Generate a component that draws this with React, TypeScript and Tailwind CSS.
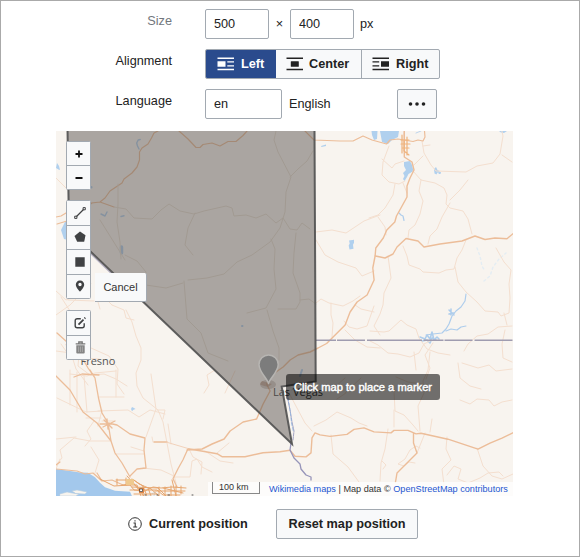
import React from "react";

const water = "#b0d0ee";

function AlignIcon({ kind }: { kind: "left" | "center" | "right" }) {
  return (
    <svg width="18" height="14" viewBox="0 0 18 14" fill="currentColor" className="shrink-0">
      {kind === "left" && (
        <>
          <path d="M.5.5h16.500v1.500H.5zM.5 11.800h16.500v1.500H.5z" />
          <path d="M.5 4.200h8v5.500h-8zM10.300 4.200H17v1.300h-6.700zM10.300 8.200H17v1.300h-6.700z" />
        </>
      )}
      {kind === "center" && (
        <>
          <path d="M.5.5H17v1.500H.5zM.5 11.800H17v1.500H.5z" />
          <rect x="4.800" y="4.200" width="8" height="5.500" rx=".5" />
        </>
      )}
      {kind === "right" && (
        <>
          <path d="M.5.5H17v1.500H.5zM.5 11.800H17v1.500H.5z" />
          <path d="M9 4.200h8v5.500H9zM.5 4.200h6.700v1.300H.5zM.5 8.200h6.700v1.300H.5z" />
        </>
      )}
    </svg>
  );
}

function MapCanvas() {
  return (
    <svg width="457" height="365" viewBox="56 131 457 365" className="absolute left-0 top-0" fill="none" strokeLinejoin="round" strokeLinecap="round">
      {/* lakes and coast */}
      <g fill={water}>
        <path d="M56 469l14 2 10 1.500 8 .2 7 4.500 5 5.500 5 4.500 10 3.500 15 1 2 4.500H56z" fill="#a3c8ec" />
        <path d="M371.500 131h6l-.5 8-3 1-2-5zM380 131h19l-1 6-6 3-4 4-6-2z" />
        <path d="M404 162l6-1 2 4 1.500 6-5 3-1.500 3-2.500 4-1.500-2 1.500-3-1.500-3 3-3-2-4z" />
        <path d="M434 169l2-2 1.500 3 2 1v2l-2-.5-1 2-2-1zM439 172h2l-.5 2h-2z" />
        <path d="M349 240.500l5-.8v3l-1 2 .5 4-4 .8-.8-4 1-2zM321 146l5-1.500v1.500l-4.500 1z" />
        <path d="M57 163l2 3 1 4-1.500-.5L56 168zM65 222l-4 8 3 9 4 1v-18zM499 131h8l-3 2-3-.5zM131 409l1-2 2 1 1.500 1-2 .7-1.500 1.500z" />
      </g>
      <g stroke="#aecdec" strokeWidth="1.400">
        <path d="M399 213l2 2 2 1 1 4.500M466 294l-1 7-4 6-5 4-4 5-3 8-3 5-4 4-9 1-7 1M446 331l5-2 6 1 4-3 5-1" strokeWidth="1.200" />
        <path d="M420 337l5 2 2-4 3 4 2-7 2 8 3-3 2 2M422 341l5-1 3 3 2-5 4 2" strokeWidth="1.600" />
        <path d="M449 310l5 5M449 314l5-1M451 309v6" strokeWidth="1.500" />
        <path d="M477 248l3 8 2 10 3 5M484 281l6-5 3-9 6-8 7-6" stroke="#e4edf3" strokeDasharray="2 3" />
        <path d="M139 149l-1.500-3-.8-3 1.500-3 2-.5M101 214l4 2 2-4M121 216.500l3-.7" strokeWidth="1.400" />
        <path d="M121.500 247v6" strokeWidth="3.500" />
        <path d="M242 326h.5M91.500 187v.5M302 370l-2 6" strokeWidth="2" />
        <path d="M298 382l-6 8M421 131l-5 2" strokeWidth=".8" />
      </g>
      <g fill="#f8f4ee" stroke="#b6cce1" strokeWidth=".6">
        <path d="M60 494l7-2 5 1 7 1-3 2H60zM72 491l5-1 10 2-2 2-9-.5z" />
        <path d="M148 496l7-4-1 4z" />
      </g>

      {/* minor roads */}
      <g stroke="#f4dfcf" strokeWidth="1">
        <path d="M404 131l-1 8M389 146l-3 8-3 8-1 13 7 7 10 2 6-3M382 159l10 9 3-4 9-3M395 184l-2 11-8 13-7 7-9 3M378 217l7 10 1 8M407 193l-4-10M422 141l2 12 7 12 5 6 30 1 11-6 16-3 7-9 3-18-2-9M502 155l10 7M413 171l8 9 14 3 9 5 3 7-1 9 4 4 13 3 5 8 4 15M450 200l10-10 8-10M450 203l-8 14-5 12-7 7-2 8M421 180l-2 11 4 10-3 13-5 11-6 5-1 8M414 165l9-9M423 146l7-1" />
        <path d="M403 246l4 10 2 9 11 4 3 3 16 1 7-3 8-1 3-11 5-8 4-10M455 267l3 15 8 10 11 10 8 9 13 1 3 4 8-3 1-15-1-14 2-14-7-8-8-14M388 256l3 22-7 15-1 12-3 9-6 12 6 9M370 331l14 1 5-1 12-11 6 5 9 4 3 9 8 11 11 4 12 2M512 326l-14 1-10 7-11 2-9 8-4 7M370 341l8 4 10 8 10 1 12 3 9-4 5-9 8-4M414 352l2 18M505 330l-3 14 1 14 9 4M504 313l3 12" />
        <path d="M316 232l16-2 14 3 18-12 16-6M316 240l9 15 13 7 18 6 6 8 12-5M316 303l5-4 8 4 14 3 10-5 7-5M331 303v12l2 8-1 14M355 305l6 4 13 3M374 306l-7 20-10 3-8-2-5-6M345 330l10 10 12 7 13 1" />
        <path d="M289 393l16 30 7 8M314 426l12-6 11-8 14 6 8 5 8 3M331 435l2 19 15 13 11 15M388 429l-3 20-4 14-1 18M394 410v17M394 390l1 21 9 4 9 10 5 6M420 431l-2-25 6-13-1-12 5-11 2-18M430 432l2-13M425 433l-8 20M420 448l-4-2-6 4-5 9-7 5 6 2 5-4 6 1M382 461l4 4-3 4M396 377l12 5 14 2M361 378l-16 15M447 437l-1 12 5 11-9 9 2 16M447 475l7-9 7 3-3 10 10 4 12-5 8-5 11-1 4 4M477 448l6 18 9 10 10 3 11-5M460 400l10 4 7-5 12 1 5 6 8-4 10-2M433 343l-8 12 5 13-4 11M462 363l16 5 11-3 7 6 16-2M458 363l2 15 10 8 11 3M336 386l9-8M337 399l9-6" />
        <path d="M56 178l10 10M56 291l10 9 15-6 10-10M56 315l14-10 8-8M61 297l9 14M68 300l26 1M98 302l2 7M112 305l12 5 2 8 8 2M112 305l-4-4M126 310l6 12 4 14 5 12v12l-5 13 1 13 6 12 15 12 5 12 8 42 5 19M56 351l15 2 5 16 12 16M61 344l7 10 14 4 17 1M79 354l-1 12 12 9 14-1 12 5 11 7M91 348l18 8 9 13-1 15 7 10M70 374l17 2 8-3 21-2M57 398l29 14 16-1M70 370v35M77 372v40M84 376l3 36M99 397h25M98 411l30-1 11 7 11-7 15 4M116 397v-27M101 418h-15M102 410l-4 16M102 421h12M151 374l5 35-10 28M157 410h8l-2 9M168 424l3 20M152 437l1 5M115 454h29M111 441h-21l-16-3-14 12 2 8-6 7M60 459l-4 10M95 473l4-13-8-13M144 451l-13-4M143 468l18 2 13 6M189 449l4 8 9 5-1 12M94 421l-7 10 4 8-6 7M56 439l20-2M173 477h17l2-16 5-2 5 8 10 5M205 451l15 10 13 2M217 453l12-10M225 393l10-22M215 370l-8 5 2 10-5 8" />
      </g>

      {/* main roads */}
      <g stroke="#ecbd99" strokeWidth="1.200">
        <path d="M158 131l-4 2-2.500 5-3.500 6-6 4-2.500 4v8l-2.500 7-5 6-8 6-2 4-12 8-5 7-5 4-8 1-9 7-16 11-10 3M91 203l9-1 14 5M179 131l9 8 8 8.500h4l3-3 9-1.500 8 3 8-4.500h8l7-6 4-4.500M305 131l9 9 26 1h13l10-5 9 4 14.500 4 3.500-4 8-1 15 2.500 5-1.500 5 1 2-4-.5-6" />
        <path d="M404.300 131v26l7.700 5 2 8-4 8-3 8v11l-5.500 10-5 9-1.700 6-8 8-3.500 8-7.500 10-.7 8-2.300 12 1.300 12-7 15-10 7-7 10-5 13-12 12-6.500 6.500-8.500 4.500-8 4-12 3-8 5-7 7-10 7-6.500 10 3.500 7-7 13-6.500 15-13.500 3-13 9-6 8-12 5-10 5-15 1" strokeWidth="1.400" />
        <path d="M375.500 256l9.500 2 8-4 4-7 9-8.500 12 2.500 6 6 16-3 22-3 13-5 10 3.500 10-1.500 12 .7 6-5" strokeWidth="1.400" />
        <path d="M188 448.700l12 2 17 3 5 3h23l18-4 17-1 10-1.500 5 6 11 .7 5-4 1-15 3-5 5 2 10 1.500 17-2 7-5 10-1.500 10 4 17 1 3-2.500h14l8 3.500 5-.7 27 6 30 10 12-6 12-5 12-6M413.500 433v10l3.500 10-10 10-10 10-1.500 9" strokeWidth="1.400" />
        <path d="M56 376l14 14 13 22 14 11 14 18 4 12 7 10 8 14M90 370l5 8 3.500 20 3.500 15 6 10 2 12 1 6M108 423l9 2 13 9 15 4-1 12 2 18-9 1-7 7M154 442h13M188 448.700l-5 11-5 9-5 10 4 8M57 333l10 9 13 12 8 14 7 10M74 377l8-3 17 1M100 424h12M103 427l12-6M104 420l8 8M107 419l1 10" strokeWidth="1.300" />
        <path d="M56 469l21 2 8 3 8-1 9 8 10-1 11 5 10-2 5 5M56 465l4-3M97 473l5 8" />
        <path d="M401 140h8M401 144h9M402 148h7M402 135v18M407 137v18M404 141v10l5 4" stroke="#efb37d" />
        <path d="M56 217l5-1 5-3" />
      </g>
      <path d="M166 442l22 6.500" stroke="#f2d2bb" />
      {/* Los Angeles street cluster */}
      <g stroke="#e7a66f" strokeWidth="1">
        <path d="M100 479l14 7 16-1 4 5 11 1 8-4 8 1 11-1 14 1M116 480h18l5 4 12 5 8 7M122 485h15l4 11M127 476l8 9 9 11M132 479l11 7 4 10M130 490h27l6 5h17M134 494h23M132 487l26 1 8 8M143 486v10M148 488l3 8M159 487v9M165 487v9M171 486v10M176 486v10M181 486v8M155 491h30M163 488l20 5M172 480l4 16M117 479v6M126 478v7" />
      </g>
      <path d="M126 479h8v6h-8z" fill="#efc98e" />
      <path d="M139 488h5v5h-5z" fill="#df8747" />
      <path d="M140 489h2.500v2.500H140z" fill="#fff" stroke="#555" strokeWidth=".8" />
      <path d="M145 495h1M157 495h1M168 495h1.500M192 495h1" stroke="#555" />

      {/* roads inside the state */}
      <g stroke="#e6ddd2" strokeWidth="1">
        <path d="M118 184v20l-1 18 3 20 1 17M114 207l12 2 8 9 18 1 9-9 8-6 11 7 14 3 10-3 22-5 6 2 2 8 12-1 10 3 10-4 10 9 7-5 7 11 7 1 5-7 8 6M195 213l-7 15-3 17 8 10M276 131l-2 9 4 12 13 25-5 15-1 20-5 16-10 14-18 13-15 7-13 12-17 4-19 2M290 177l8-8 9-8 6-10M271 239l4 10-1 20 2 20-10 19-19 5M267 310l6 21 6 17v12M296 233l-2 20-1 20 7 20v9l-4 7h-18M300 300l9-1 7 5M184 281l3 38 14 14 7 20 20 8M125 255l12 6 9 11v13l20 3 17-5M100 220l25 40" />
      </g>

      {/* state line and river */}
      <path d="M316 340.300H512.500" stroke="#9f9cb0" strokeWidth="1.500" strokeDasharray="20 1 28 2 55 1.500" strokeLinecap="butt" />
      <path d="M91 254l22 21" stroke="#b9b4c6" strokeWidth="1.500" />
      <path d="M287 390l1 10 2 10 2 12 2 9-1 9" stroke="#a3a3c2" strokeWidth="1" strokeDasharray="3 1" />
      <path d="M291 443l-1 7 4 8 6 6 1 5 5 6 5 2v3" stroke="#9694b9" strokeWidth="1.300" />
      <path d="M288 398l2.500 15 1 10 2 9" stroke="#8eb3df" strokeWidth=".8" strokeDasharray="3 2" />

      <path d="M262 381q-3 3-1 4l7 2 4-3z" fill="#c9a086" opacity=".6" />
      <path d="M66 345l14 9" stroke="#ecb997" />
      <text x="80.500" y="365" fill="#555" fontSize="11" fontFamily="'Open Sans','Noto Sans',sans-serif">Fresno</text>
      <text x="273" y="395.800" fill="#3c3c3c" fontSize="11" fontFamily="'Open Sans','Noto Sans',sans-serif">Las Vegas</text>

      {/* highlighted region */}
      <path d="M67.500 129L69 231 292 444 281.700 386.500l34-5L314.500 129z" fill="#5a5450" fillOpacity=".49" stroke="#505050" strokeWidth="2" strokeOpacity=".9" strokeLinejoin="miter" />

      <ellipse cx="268" cy="384.500" rx="8" ry="4.500" fill="#6b5e57" opacity=".3" />
      <path d="M268.500 383.500C267 378 259 372 259 364.500a9.600 9.600 0 0 1 19.200 0c0 7.500-8.200 13.500-9.700 19z" fill="#7c7c7c" stroke="#b7b5b2" strokeWidth="1.500" />
    </svg>
  );
}

function Tool({ children, first }: { children: React.ReactNode; first?: boolean }) {
  return (
    <button className={"flex w-full flex-1 items-center justify-center border-[#a2a9b1] text-[#404244] " + (first ? "" : "border-t")}>
      {children}
    </button>
  );
}

const toolbar = "flex w-[25px] flex-col overflow-hidden rounded-[1.5px] border border-[#a2a9b1] bg-[#f8f9fa]";
const input = "h-[30px] rounded-[2px] border border-[#a2a9b1] bg-white px-2 text-[12.7px] text-[#222] outline-none";

export default function App() {
  return (
    <div className="h-[557px] w-[580px] overflow-hidden border border-[#aaa] bg-white font-['Liberation_Sans',Arial,sans-serif] text-[12.7px] leading-4 text-[#222]">
      <div className="flex h-[130px] flex-col gap-[10px] pt-2">
        <div className="flex h-[30px] items-center">
          <label className="mb-[6px] w-[171px] text-right text-[#72777d]">Size</label>
          <input className={input + " ml-[33px] w-[64px]"} defaultValue="500" />
          <span className="w-[21px] text-center">×</span>
          <input className={input + " w-[64px]"} defaultValue="400" />
          <span className="ml-[6px]">px</span>
        </div>
        <div className="flex h-[30px] items-center">
          <label className="mb-[6px] w-[171px] text-right">Alignment</label>
          <div className="ml-[33px] flex h-[30px] w-[235px] overflow-hidden rounded-[2px] border border-[#a2a9b1] bg-[#f8f9fa] font-bold">
            <button className="-my-px -ml-px flex w-[71px] items-center gap-[6px] bg-[#2a4b8d] pl-[12px] text-white"><AlignIcon kind="left" />Left</button>
            <button className="flex w-[85px] items-center gap-[5px] pl-[10px]"><AlignIcon kind="center" />Center</button>
            <button className="flex flex-1 items-center gap-[6px] border-l border-[#a2a9b1] pl-[10px]"><AlignIcon kind="right" />Right</button>
          </div>
        </div>
        <div className="flex h-[30px] items-center">
          <label className="mb-[6px] w-[171px] text-right">Language</label>
          <input className={input + " ml-[33px] w-[77px]"} defaultValue="en" />
          <span className="ml-[7px] w-[108px]">English</span>
          <button className="flex h-[30px] w-[40px] items-center justify-center rounded-[2px] border border-[#a2a9b1] bg-[#f8f9fa]">
            <svg width="18" height="4" viewBox="0 0 18 4" fill="#222"><circle cx="2.500" cy="2" r="1.800" /><circle cx="9" cy="2" r="1.800" /><circle cx="15.500" cy="2" r="1.800" /></svg>
          </button>
        </div>
      </div>

      <div className="relative ml-[55px] h-[365px] w-[457px] overflow-hidden bg-[#f8f4ef]">
        <MapCanvas />
        <div className="absolute left-[10px] top-[10px] flex flex-col">
          <div className={toolbar + " h-[49px]"}>
            <Tool first><svg width="8" height="8" viewBox="0 0 8 8"><path d="M4 .5v7M.5 4h7" stroke="#111" strokeWidth="1.800" /></svg></Tool>
            <Tool><svg width="8" height="8" viewBox="0 0 8 8"><path d="M.5 4h7" stroke="#111" strokeWidth="1.800" /></svg></Tool>
          </div>
          <div className={toolbar + " mt-[10px] h-[99px] [&_svg]:ml-[3px]"}>
            <Tool first><svg width="12" height="12" viewBox="0 0 12 12" fill="none" stroke="currentColor"><path d="M2.500 9.500l7-7" strokeWidth="1.300" /><path d="M.7 9.200h2.200v2.200H.7zM9.100.6h2.200v2.200H9.100z" strokeWidth="1" /></svg></Tool>
            <Tool><svg width="12" height="12" viewBox="0 0 12 12"><path d="M6 .5l5.500 3.800-1.300 6.400H3.200L.5 5z" fill="currentColor" /></svg></Tool>
            <Tool><svg width="10" height="10" viewBox="0 0 10 10"><path d="M.3.3h9.400v9.400H.3z" fill="currentColor" /></svg></Tool>
            <Tool><svg width="10" height="12" viewBox="0 0 10 12"><path fillRule="evenodd" d="M5 .5A4 4 0 0 0 .8 4.700C.8 7.500 5 11.600 5 11.600s4.200-4.100 4.200-6.900A4 4 0 0 0 5 .5zm0 2.300a1.700 1.700 0 1 1 0 3.400 1.700 1.700 0 0 1 0-3.400z" fill="currentColor" /></svg></Tool>
          </div>
          <div className={toolbar + " mt-[11px] h-[50px] [&_svg]:ml-[3px]"}>
            <Tool first><svg width="12" height="12" viewBox="0 0 12 12" fill="none" stroke="currentColor"><path d="M6.800 1.800H3.200Q1.200 1.800 1.200 3.800v5q0 2 2 2h5q2 0 2-2V6.300" strokeWidth="1.400" /><path d="M4.500 7.600l5-5M10.500 1.500l.8-.8" strokeWidth="1.800" /></svg></Tool>
            <Tool><svg width="11" height="13" viewBox="0 0 11 13"><path d="M.7 2.800h9.600M3.800 2.500V1h3.400v1.500" fill="none" stroke="#777" strokeWidth="1.300" /><path d="M1.300 4.200h8.400v7.300q0 1-1 1H2.300q-1 0-1-1z" fill="#858585" /><path d="M3.600 5.500v5.500M5.500 5.500v5.500M7.400 5.500v5.500" stroke="#b5b5b5" strokeWidth=".7" /></svg></Tool>
          </div>
        </div>
        <button className="absolute left-[39px] top-[142px] h-[29px] w-[52px] rounded-r-[2px] border-b border-r border-[#a2a9b1] bg-[#f8f9fa] text-[11px] text-[#333]">Cancel</button>
        <div className="absolute left-[230px] top-[243px] flex h-[26px] w-[154px] items-center rounded-[3px] bg-black/55 pl-2 text-[11.150px] text-white whitespace-nowrap [-webkit-text-stroke:0.400px_white]">Click map to place a marker</div>
        <div className="absolute bottom-0 right-0 flex h-[14px] w-[305px] items-start bg-white/75 text-[9px] leading-3 whitespace-nowrap text-[#333]">
          <div className="ml-1 h-3 w-[48px] border border-t-0 border-[#888] pl-[6px] leading-[11px]">100 km</div>
          <div className="ml-[9px] pt-px text-[9.140px]"><a className="text-[#2557d1]">Wikimedia maps</a> | Map data © <a className="text-[#2557d1]">OpenStreetMap contributors</a></div>
        </div>
      </div>

      <div className="flex items-center pl-[127px] pt-[13px] font-bold">
        <svg width="14" height="14" viewBox="0 0 14 14" fill="none" stroke="#333"><circle cx="7" cy="7" r="6.300" /><path d="M5.500 6h1.700v4M5.200 10h4M7 3.300v1.300" strokeWidth="1.100" /></svg>
        <span className="ml-[7px] w-[127px]">Current position</span>
        <button className="h-[30px] w-[142px] rounded-[2px] border border-[#a2a9b1] bg-[#f8f9fa]">Reset map position</button>
      </div>
    </div>
  );
}
